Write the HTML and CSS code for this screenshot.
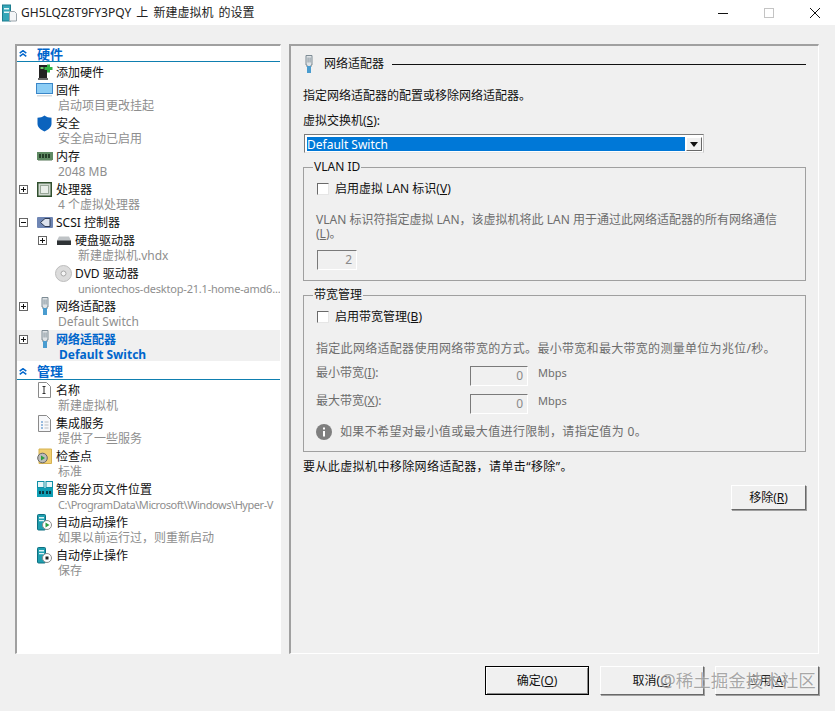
FILE: index.html
```html
<!DOCTYPE html>
<html lang="zh-CN">
<head>
<meta charset="utf-8">
<title>设置</title>
<link rel="stylesheet" href="styles.css">
</head>
<body>
<svg class="defs" width="0" height="0">
  <symbol id="nic" viewBox="0 0 10 18">
    <path d="M2 .5h6v9.500h-1v2h-4v-2h-1z" fill="#dfe3e6" stroke="#7d8b94"/>
    <path d="M3.600 2.500h.9v5h-.9zM5.600 2.500h.9v5h-.9z" fill="#7d8b94"/>
    <rect x="3" y="11" width="4" height="7" fill="#4a9ccf"/>
  </symbol>
  <symbol id="srv" viewBox="0 0 16 17">
    <rect x=".5" y=".5" width="8" height="15.500" rx="1" fill="#1f9fb0" stroke="#0f6f80"/>
    <path d="M2 3h5v1.600h-5zM2 6h5v1.200h-5z" fill="#dff4f6"/>
  </symbol>
  <symbol id="chev" viewBox="0 0 8 7">
    <path d="M.7 3.200 4 .7l3.300 2.500M.7 6.400 4 3.900l3.300 2.500" fill="none" stroke="#0066cc" stroke-width="1.500"/>
  </symbol>
</svg>

<header class="titlebar">
  <svg class="title-icon" width="15" height="18" viewBox="0 0 15 18">
    <rect x=".5" y="1" width="8" height="16" fill="#35a6b8" stroke="#1d7d8f"/>
    <path d="M2 4h5v1.500H2zM2 7.500h5V9H2z" fill="#e4f6f8"/>
    <path d="M7.500 7.500h5l2 2v7.500h-7z" fill="#f4f6f8" stroke="#9aa4ab"/>
  </svg>
  <span class="title-text">GH5LQZ8T9FY3PQY 上 新建虚拟机 的设置</span>
  <div class="win-controls">
    <svg width="12" height="12" viewBox="0 0 12 12"><path d="M1 6.500h10" stroke="#111"/></svg>
    <svg width="12" height="12" viewBox="0 0 12 12"><rect x="1.500" y="1.500" width="9" height="9" fill="none" stroke="#c4c4c4"/></svg>
    <svg width="12" height="12" viewBox="0 0 12 12"><path d="M1 1l10 10M11 1 1 11" stroke="#111" fill="none"/></svg>
  </div>
</header>

<main class="content">
  <nav class="tree">
    <div class="section"><svg class="chev" width="8" height="7"><use href="#chev"/></svg><span>硬件</span></div>

    <div class="row"><i></i><svg width="16" height="16" viewBox="0 0 16 16"><rect x="2" y="1" width="8" height="14" fill="#222"/><rect x="3.500" y="3" width="3" height="2" fill="#6fcf6f"/><rect x="1" y="14" width="10" height="2" fill="#666"/><path d="M10 .5h3v2.500h2.500v3H13v2.500h-3V6H7.500V3H10z" fill="#2fb344"/></svg><span>添加硬件</span></div>

    <div class="row"><i></i><svg width="17" height="14" viewBox="0 0 17 14"><rect x=".5" y=".5" width="16" height="10" fill="#8ccdf5" stroke="#3a86c8"/><rect x="1" y="12" width="15" height="1.500" fill="#d7dbde"/></svg><span>固件</span></div>
    <div class="sub">启动项目更改挂起</div>

    <div class="row"><i></i><svg width="15" height="17" viewBox="0 0 15 17"><path d="M7.500.5c2 1.600 4.300 2.200 7 2.300v6c0 3.600-3.200 6-7 7.700-3.800-1.700-7-4.100-7-7.700v-6c2.700-.1 5-.7 7-2.300z" fill="#0b63bd"/></svg><span>安全</span></div>
    <div class="sub">安全启动已启用</div>

    <div class="row"><i></i><svg width="16" height="11" viewBox="0 0 16 11"><rect y="1" width="16" height="8" fill="#5f8a63"/><path d="M2 3h2v4H2zM5 3h2v4H5zM8 3h2v4H8zM11 3h2v4h-2z" fill="#26402a"/><path d="M1 9.500h14" stroke="#a9b9aa"/></svg><span>内存</span></div>
    <div class="sub">2048 MB</div>

    <div class="row"><b class="exp plus"></b><svg width="15" height="15" viewBox="0 0 15 15"><rect x=".75" y=".75" width="13.500" height="13.500" fill="#cfd8cf" stroke="#31502f" stroke-width="1.500"/><rect x="3.500" y="3.500" width="8" height="8" fill="#e9eee9" stroke="#9aa89a"/></svg><span>处理器</span></div>
    <div class="sub">4 个虚拟处理器</div>

    <div class="row"><b class="exp"></b><svg width="16" height="13" viewBox="0 0 16 13"><rect y="1" width="16" height="11" rx="1" fill="#6f86b4"/><path d="M8 2.500 3.500 6.500 8 10.500h5v-8z" fill="#dde3ee" stroke="#2d3a55"/></svg><span>SCSI 控制器</span></div>

    <div class="row nested"><b class="exp plus"></b><svg width="14" height="9" viewBox="0 0 14 9"><path d="M2 .5h10l2 4v4H0v-4z" fill="#bfc3c6"/><rect y="4.500" width="14" height="4.500" fill="#2f3336"/></svg><span>硬盘驱动器</span></div>
    <div class="sub nested-sub">新建虚拟机.vhdx</div>

    <div class="row nested"><i></i><svg width="17" height="17" viewBox="0 0 17 17"><circle cx="8.500" cy="8.500" r="8" fill="#dcdcdc" stroke="#bdbdbd"/><circle cx="8.500" cy="8.500" r="2.500" fill="#f6f6f6" stroke="#a9a9a9"/></svg><span>DVD 驱动器</span></div>
    <div class="sub nested-sub iso">uniontechos-desktop-21.1-home-amd6...</div>

    <div class="row"><b class="exp plus"></b><svg class="nic-ic" width="10" height="18"><use href="#nic"/></svg><span>网络适配器</span></div>
    <div class="sub">Default Switch</div>

    <div class="selected">
      <div class="row"><b class="exp plus"></b><svg class="nic-ic" width="10" height="18"><use href="#nic"/></svg><span>网络适配器</span></div>
      <div class="sub">Default Switch</div>
    </div>

    <div class="section"><svg class="chev" width="8" height="7"><use href="#chev"/></svg><span>管理</span></div>

    <div class="row"><i></i><svg width="13" height="16" viewBox="0 0 13 16"><path d="M.5.5h8l4 4v11H.5z" fill="#fff" stroke="#8a8a8a"/><path d="M4.500 4.500h3M4.500 11.500h3M6 4.500v7" stroke="#333" fill="none"/></svg><span>名称</span></div>
    <div class="sub">新建虚拟机</div>

    <div class="row"><i></i><svg width="13" height="17" viewBox="0 0 13 17"><path d="M.5.500h8l4 4v12H.5z" fill="#f7f8fa" stroke="#8a8a8a"/><path d="M3 7h2M3 10h2M3 13h2" stroke="#3a7fc2" fill="none"/><path d="M6.500 7h4M6.500 10h4M6.500 13h4" stroke="#b8bcc0" fill="none"/></svg><span>集成服务</span></div>
    <div class="sub">提供了一些服务</div>

    <div class="row"><i></i><svg width="15" height="16" viewBox="0 0 15 16"><path d="M2 1h12.500v14.500H2z" fill="#f0cf72" stroke="#d6b251"/><circle cx="5.500" cy="10" r="4.800" fill="#bcbcbc" stroke="#666"/><path d="M4 7.500l4 2.500-4 2.500z" fill="#2e9e3f"/></svg><span>检查点</span></div>
    <div class="sub">标准</div>

    <div class="row"><i></i><svg width="16" height="16" viewBox="0 0 16 16"><rect x=".5" y=".5" width="6.500" height="6" fill="#e8f7f9" stroke="#0f8fa6"/><rect x="9" y=".5" width="6.500" height="6" fill="#e8f7f9" stroke="#0f8fa6"/><rect y="7" width="16" height="9" fill="#0f9fb5"/><path d="M2 10h2v3H2zM5 10h2v3H5zM9 10h2v3H9zM12 10h2v3h-2z" fill="#0b3c48"/></svg><span>智能分页文件位置</span></div>
    <div class="sub path">C:\ProgramData\Microsoft\Windows\Hyper-V</div>

    <div class="row"><i></i><svg width="15" height="17" viewBox="0 0 15 17"><use href="#srv" width="16" height="17"/><circle cx="10" cy="11" r="4.500" fill="#fff" stroke="#8a8a8a"/><path d="M8.500 8.500l4 2.500-4 2.500z" fill="#2e9e3f"/></svg><span>自动启动操作</span></div>
    <div class="sub">如果以前运行过，则重新启动</div>

    <div class="row"><i></i><svg width="15" height="17" viewBox="0 0 15 17"><use href="#srv" width="16" height="17"/><circle cx="10" cy="11" r="4.500" fill="#fff" stroke="#8a8a8a"/><rect x="8.500" y="9.500" width="3" height="3" fill="#222"/></svg><span>自动停止操作</span></div>
    <div class="sub">保存</div>
  </nav>

  <section class="panel">
    <div class="panel-head">
      <svg class="head-ic" width="10" height="18"><use href="#nic"/></svg>
      <span>网络适配器</span>
      <div class="rule"></div>
    </div>
    <p class="intro">指定网络适配器的配置或移除网络适配器。</p>
    <p class="switch-label">虚拟交换机(<u>S</u>):</p>
    <div class="select">
      <span class="select-value">Default Switch</span>
      <span class="select-btn"><svg width="8" height="5" viewBox="0 0 8 5"><path d="M0 0h8L4 5z" fill="#111"/></svg></span>
    </div>

    <fieldset class="group vlan">
      <legend>VLAN ID</legend>
      <label class="check"><span class="box"></span><span>启用虚拟 LAN 标识(<u>V</u>)</span></label>
      <p class="muted vlan-desc">VLAN 标识符指定虚拟 LAN，该虚拟机将此 LAN 用于通过此网络适配器的所有网络通信<br>(<u>L</u>)。</p>
      <div class="num vlan-num">2</div>
    </fieldset>

    <fieldset class="group band">
      <legend>带宽管理</legend>
      <label class="check"><span class="box"></span><span>启用带宽管理(<u>B</u>)</span></label>
      <p class="muted band-desc">指定此网络适配器使用网络带宽的方式。最小带宽和最大带宽的测量单位为兆位/秒。</p>
      <div class="limit first"><span class="limit-label">最小带宽(<u>I</u>):</span><div class="num">0</div><span class="unit">Mbps</span></div>
      <div class="limit"><span class="limit-label">最大带宽(<u>X</u>):</span><div class="num">0</div><span class="unit">Mbps</span></div>
      <div class="note">
        <svg width="16" height="16" viewBox="0 0 16 16"><circle cx="8" cy="8" r="8" fill="#7f7f7f"/><rect x="7" y="7" width="2" height="5.500" fill="#fff"/><rect x="7" y="3.500" width="2" height="2" fill="#fff"/></svg>
        <span>如果不希望对最小值或最大值进行限制，请指定值为 0。</span>
      </div>
    </fieldset>

    <p class="remove-text">要从此虚拟机中移除网络适配器，请单击“移除”。</p>
    <div class="remove-row"><button class="btn remove">移除(<u>R</u>)</button></div>
  </section>
</main>

<footer class="footer">
  <button class="btn primary">确定(<u>O</u>)</button>
  <button class="btn">取消(<u>C</u>)</button>
  <button class="btn">应用(<u>A</u>)</button>
  <div class="watermark">@稀土掘金技术社区</div>
</footer>
</body>
</html>
```
FILE: styles.css
```css
* { box-sizing: border-box; }
html, body { margin: 0; padding: 0; }
body {
  width: 835px;
  height: 711px;
  overflow: hidden;
  background: #f0f0f0;
  color: #111;
  font-family: "Noto Sans", "Noto Sans CJK SC", sans-serif;
  font-size: 12px;
  line-height: 16px;
  position: relative;
}
p { margin: 0; }
u { text-underline-offset: 1px; }
.defs { position: absolute; }

.titlebar {
  height: 25px;
  background: #fff;
  display: flex;
  align-items: center;
  padding-left: 2px;
}
.title-icon { margin-right: 4px; }
.title-text { font-size: 12px; color: #222; word-spacing: 2px; }
.win-controls {
  margin-left: auto;
  display: flex;
  gap: 34px;
  padding-right: 14px;
}

.content {
  display: flex;
  gap: 8px;
  padding: 19px 0 0 15px;
  height: 629px;
}

/* left tree */
.tree {
  width: 266px;
  height: 610px;
  background: #fff;
  border-style: solid;
  border-width: 2px 1px 1px 2px;
  border-color: #a0a0a0 #fff #fff #a0a0a0;
  overflow: hidden;
}
.section {
  height: 17px;
  margin-bottom: 1px;
  display: flex;
  align-items: center;
  padding-left: 2px;
  border-bottom: 1px solid #0f7fb0;
  color: #0066cc;
  font-weight: 700;
  font-size: 13px;
  gap: 10px;
}
.section:first-child { height: 16px; }
.section .chev { flex: none; }
.row {
  height: 18px;
  display: grid;
  grid-template-columns: 16px 23px 1fr;
  align-items: center;
  justify-items: center;
  white-space: nowrap;
}
.row > span { justify-self: start; padding-top: 1px; }
.row i { display: block; }
.exp {
  width: 9px;
  height: 9px;
  border: 1px solid #666;
  background: linear-gradient(#111, #111) center / 5px 1px no-repeat, #fff;
  margin-left: -3px;
}
.exp.plus {
  background:
    linear-gradient(#111, #111) center / 5px 1px no-repeat,
    linear-gradient(#111, #111) center / 1px 5px no-repeat,
    #fff;
}
.sub {
  height: 15px;
  line-height: 13px;
  padding-left: 41px;
  color: #8e8e8e;
  white-space: nowrap;
}
.sub.path { overflow: hidden; width: 257px; font-size: 11px; letter-spacing: -.45px; }
.nested { padding-left: 19px; }
.nested-sub { padding-left: 61px; }
.sub.iso { font-size: 11px; letter-spacing: -.2px; }
.nic-ic { justify-self: center; }
.selected { background: #f0f0f0; height: 31px; margin-bottom: 2px; }
.selected .row { color: #0066cc; font-weight: 700; }
.selected .sub { color: #0066cc; font-weight: 700; padding-left: 42px; }

/* right panel */
.panel {
  width: 530px;
  height: 610px;
  border-style: solid;
  border-width: 2px 1px 1px 2px;
  border-color: #a0a0a0 #fff #fff #a0a0a0;
  padding: 9px 12px 0 12px;
}
.panel-head {
  display: flex;
  align-items: center;
  height: 18px;
}
.head-ic { margin: 0 10px 0 1px; }
.panel-head span { flex: none; }
.rule { flex: 1; height: 1px; background: #111; margin-left: 8px; }
.intro { margin-top: 15px; }
.switch-label { margin-top: 9px; }
.select {
  margin: 5px 0 0 1px;
  width: 400px;
  height: 19px;
  display: flex;
  padding: 2px 1px 1px 2px;
  border-style: solid;
  border-width: 1px;
  border-color: #7a7a7a #c8c8c8 #e8e8e8 #7a7a7a;
  background: #fff;
}
.select-value {
  flex: 1;
  background: #0078d7;
  color: #fff;
  line-height: 15px;
}
.select-btn {
  width: 16px;
  margin-left: 1px;
  background: #f0f0f0;
  border: 1px solid;
  border-color: #fff #696969 #696969 #fff;
  display: flex;
  align-items: center;
  justify-content: center;
}
.group {
  margin: 7px 0 0 0;
  width: 503px;
  padding: 0 12px;
  border: 1px solid #a0a0a0;
  position: relative;
}
.group legend { padding: 0 1px; margin-left: -3px; line-height: 14px; height: 14px; }
.check { display: flex; align-items: center; gap: 6px; height: 16px; margin-top: 7px; padding-left: 1px; }
.box {
  width: 12px;
  height: 12px;
  background: #fff;
  border: 1px solid;
  border-color: #6a6a6a #e6e6e6 #e6e6e6 #6a6a6a;
  flex: none;
}
.vlan { height: 121px; }
.vlan-desc { margin-top: 16px; line-height: 14px; }
.muted { color: #6d6d6d; }
.num {
  width: 40px;
  height: 20px;
  border: 1px solid;
  border-color: #7a7a7a #fff #fff #7a7a7a;
  text-align: right;
  color: #8a8a8a;
  padding-right: 4px;
  line-height: 18px;
  flex: none;
}
.vlan-num { margin: 9px 0 0 1px; }
.band { height: 164px; }
.band-desc { margin-top: 16px; letter-spacing: .3px; }
.limit { display: flex; align-items: flex-start; height: 20px; line-height: 14px; color: #6d6d6d; margin-top: 8px; }
.limit.first { margin-top: 9px; }
.limit-label { width: 154px; flex: none; }
.limit .num { width: 58px; line-height: 18px; }
.unit { margin-left: 10px; font-size: 11px; }
.note { display: flex; align-items: center; gap: 8px; margin-top: 10px; color: #6d6d6d; letter-spacing: .35px; }
.remove-text { margin-top: 7px; letter-spacing: .4px; }
.remove-row { display: flex; justify-content: flex-end; margin-top: 10px; width: 503px; }

.btn {
  font: inherit;
  color: #111;
  width: 104px;
  height: 29px;
  padding: 0;
  background: #f0f0f0;
  border: 1px solid;
  border-color: #fff #696969 #696969 #fff;
  box-shadow: 1px 1px 0 #a0a0a0;
}
.btn.remove { width: 75px; height: 25px; }
.btn.primary {
  border: 1px solid #000;
  box-shadow: inset 1px 1px 0 #fff, inset -1px -1px 0 #8a8a8a;
}
.footer {
  display: flex;
  justify-content: flex-end;
  gap: 11px;
  padding-right: 16px;
  margin-top: 12px;
  position: relative;
}
.watermark {
  position: absolute;
  left: 660px;
  top: 2px;
  font-size: 17.5px;
  line-height: 24px;
  white-space: nowrap;
  color: rgba(140, 140, 140, .75);
  text-shadow: 0 0 2px #fff;
}
```
